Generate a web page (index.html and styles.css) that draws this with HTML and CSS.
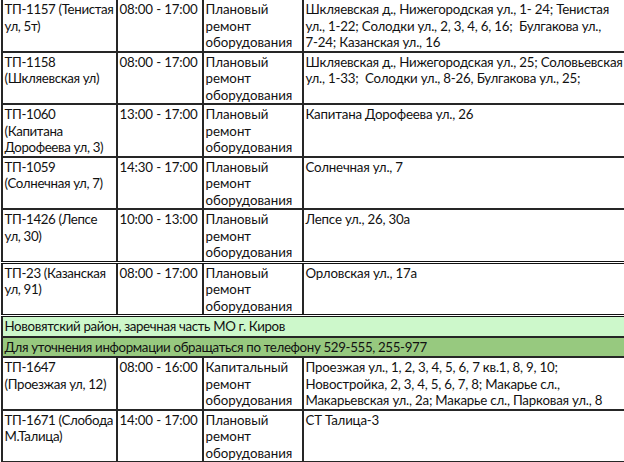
FILE: index.html
```html
<!DOCTYPE html>
<html lang="ru">
<head>
<meta charset="utf-8">
<link rel="stylesheet" href="styles.css">
</head>
<body>
<table class="sched">
  <colgroup>
    <col class="c1"><col class="c2"><col class="c3"><col class="c4">
  </colgroup>
  <tr class="first">
    <td>ТП-1157 (Тенистая ул, 5т)</td>
    <td>08:00 - 17:00</td>
    <td>Плановый ремонт оборудования</td>
    <td>Шкляевская д., Нижегородская ул., 1- 24; Тенистая ул., 1-22; Солодки ул., 2, 3, 4, 6, 16;&nbsp; Булгакова ул., <span class="nw">7-24;</span> Казанская ул., 16</td>
  </tr>
  <tr>
    <td>ТП-1158 (Шкляевская ул)</td>
    <td>08:00 - 17:00</td>
    <td>Плановый ремонт оборудования</td>
    <td>Шкляевская д., Нижегородская ул., 25; Соловьевская ул., 1-33;&nbsp; Солодки ул., 8-26, Булгакова ул., 25;</td>
  </tr>
  <tr>
    <td>ТП-1060 (Капитана Дорофеева ул, 3)</td>
    <td>13:00 - 17:00</td>
    <td>Плановый ремонт оборудования</td>
    <td>Капитана Дорофеева ул., 26</td>
  </tr>
  <tr>
    <td>ТП-1059 (Солнечная ул, 7)</td>
    <td>14:30 - 17:00</td>
    <td>Плановый ремонт оборудования</td>
    <td>Солнечная ул., 7</td>
  </tr>
  <tr>
    <td>ТП-1426 (Лепсе ул, 30)</td>
    <td>10:00 - 13:00</td>
    <td>Плановый ремонт оборудования</td>
    <td>Лепсе ул., 26, 30а</td>
  </tr>
  <tr class="dbl">
    <td>ТП-23 (Казанская ул, 91)</td>
    <td>08:00 - 17:00</td>
    <td>Плановый ремонт оборудования</td>
    <td>Орловская ул., 17а</td>
  </tr>
  <tr class="region dbl">
    <td colspan="4">Нововятский район, заречная часть МО г. Киров</td>
  </tr>
  <tr class="phone">
    <td colspan="4">Для уточнения информации обращаться по телефону 529-555, 255-977</td>
  </tr>
  <tr>
    <td>ТП-1647 (Проезжая ул, 12)</td>
    <td>08:00 - 16:00</td>
    <td>Капитальный ремонт оборудования</td>
    <td>Проезжая ул., 1, 2, 3, 4, 5, 6, 7 кв.1, 8, 9, 10; Новостройка, 2, 3, 4, 5, 6, 7, 8; Макарье сл., Макарьевская ул., 2а; Макарье сл., Парковая ул., 8</td>
  </tr>
  <tr>
    <td>ТП-1671 (Слобода М.Талица)</td>
    <td>14:00 - 17:00</td>
    <td>Плановый ремонт оборудования</td>
    <td>СТ Талица-3</td>
  </tr>
</table>
</body>
</html>
```
FILE: styles.css
```css
html, body {
  margin: 0;
  padding: 0;
  background: #fff;
  overflow: hidden;
}
body {
  width: 624px;
  height: 462px;
}
.sched {
  border-collapse: collapse;
  table-layout: fixed;
  width: 634px;
  margin: -2px 0 0 1px;
  font-family: Lato, "Open Sans", sans-serif;
  font-size: 13.3px;
  line-height: 16.5px;
  color: #111;
}
.c1 { width: 115px; }
.c2 { width: 86px; }
.c3 { width: 100px; }
.c4 { width: 333px; }
.sched td {
  border: 2px solid #262626;
  padding: 1px 0 0 1.5px;
  vertical-align: top;
  overflow: hidden;
}
.sched td:nth-child(1) {
  letter-spacing: -0.35px;
}
.sched td:nth-child(2) {
  white-space: nowrap;
  letter-spacing: -0.15px;
}
.sched td:nth-child(4) {
  padding-right: 8px;
  letter-spacing: -0.2px;
}
.nw {
  white-space: nowrap;
}
.sched tr.dbl td {
  border-top: 3px double #111;
}
.sched tr.region td {
  background: #cdf8cb;
  line-height: 18.5px;
  padding-top: 0;
}
.sched tr.phone td {
  background: #97c97f;
  line-height: 18.5px;
  padding-top: 0;
}
```
